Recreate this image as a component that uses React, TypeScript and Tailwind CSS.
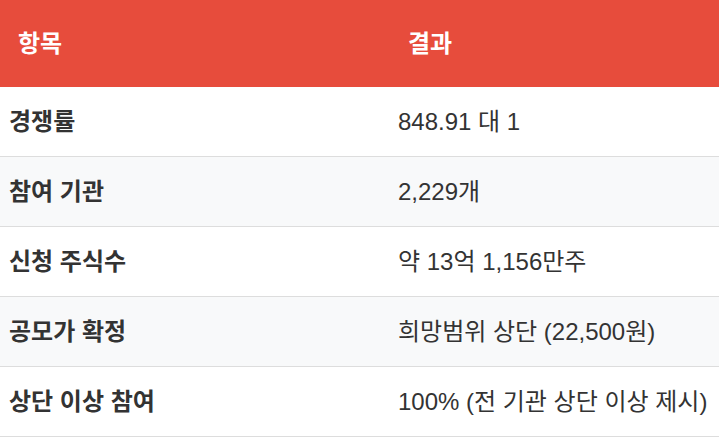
const ROWS = [
  { label: "경쟁률", value: "848.91 대 1" },
  { label: "참여 기관", value: "2,229개" },
  { label: "신청 주식수", value: "약 13억 1,156만주" },
  { label: "공모가 확정", value: "희망범위 상단 (22,500원)" },
  { label: "상단 이상 참여", value: "100% (전 기관 상단 이상 제시)" },
];

export default function App() {
  return (
    <div className="w-[719px] h-[437px] bg-white text-[24px] text-[#333] font-['Liberation_Sans','Noto_Sans_CJK_KR',sans-serif]">
      <div className="flex h-[87px] items-center bg-[#e74c3c] font-bold text-white">
        <div className="w-[389px] pl-[18px]">항목</div>
        <div className="flex-1 pl-[19px]">결과</div>
      </div>
      {ROWS.map((r, i) => (
        <div
          key={r.label}
          className={`flex h-[70px] items-center border-b border-[#dddddd] ${i % 2 === 1 ? "bg-[#f8f9fa]" : "bg-white"}`}
        >
          <div className="w-[389px] pl-[9px] font-bold">{r.label}</div>
          <div className="flex-1 pl-[9px]">{r.value}</div>
        </div>
      ))}
    </div>
  );
}
